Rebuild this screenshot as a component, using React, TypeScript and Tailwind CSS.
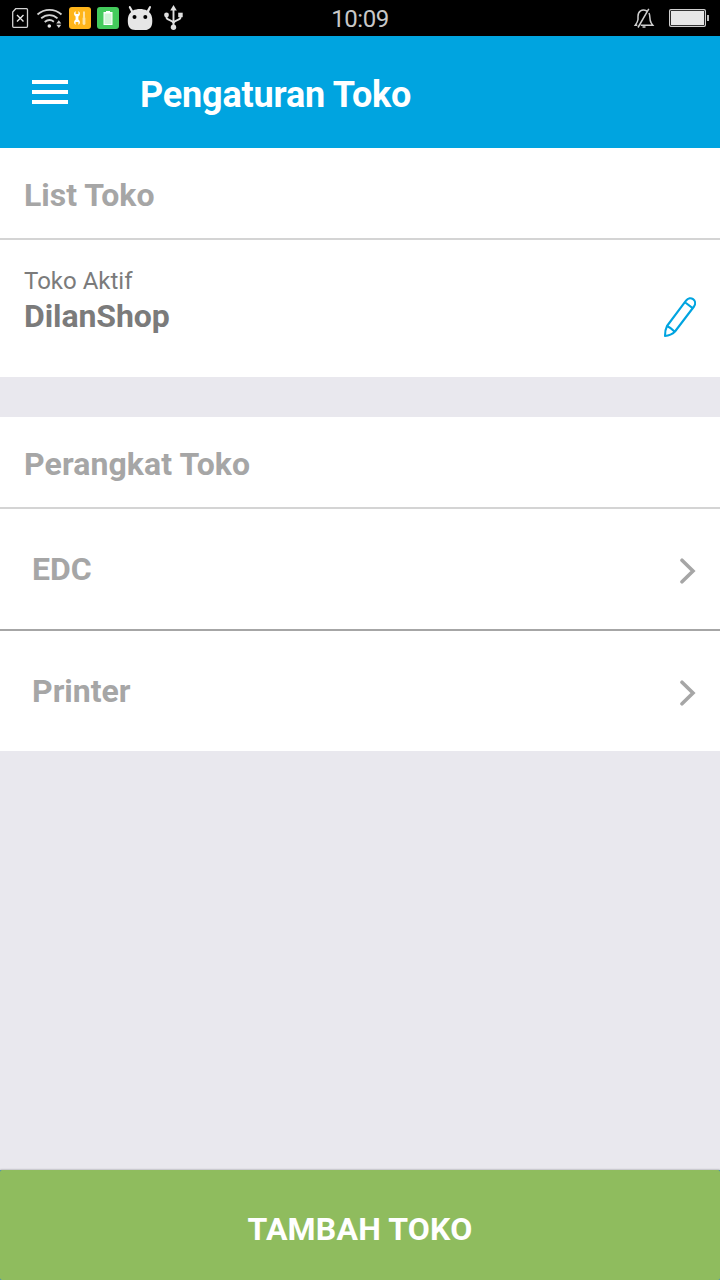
import React from "react";

function StatusBar() {
  return (
    <header className="grid h-9 grid-cols-3 items-center bg-black">
      <svg width="200" height="36" viewBox="0 0 200 36" fill="none">
        <path d="M15.700 8.700H26.500a1 1 0 0 1 1 1v16.600a1 1 0 0 1-1 1h-12.800a1 1 0 0 1-1-1V12Z" stroke="#d2d2d2" strokeWidth="1.300" />
        <path d="m17 15 6.500 6.500M23.500 15 17 21.500" stroke="#e6e6e6" strokeWidth="1.400" />
        <path d="M37.500 14.500c7-6.300 17-6.300 24 0M41.200 18.300c5-4.300 11.500-4.300 16.300 0M44.700 22c3-2.500 6.300-2.500 9.200-.3" stroke="#d2d2d2" strokeWidth="1.800" />
        <circle cx="49.300" cy="26" r="1.800" fill="#e6e6e6" />
        <path d="m58.800 20.200 2.500 3.200h-5Zm0 7.800 2.500-3.200h-5Z" fill="#d2d2d2" />
        <rect x="69" y="7" width="22" height="22" rx="3" fill="#ffb51a" />
        <path d="M75.600 11v3h2.800v-3c2.100 1.500 2.100 4.300 0 5.500v3c2.100 1.200 2.100 4 0 5.500v-3h-2.800v3c-2.100-1.500-2.100-4.300 0-5.500v-3c-2.100-1.200-2.100-4 0-5.500Z" fill="#fff" />
        <path d="M84 11.500v6" stroke="#fff" strokeWidth="1.200" />
        <path d="M84 18.500v5" stroke="#ffe4a3" strokeWidth="2.800" strokeLinecap="round" />
        <rect x="97" y="7" width="22" height="22" rx="3" fill="#44cb5c" />
        <path d="M103.500 12h2.500v-1h4v1h2.500v13h-9Z" fill="#fff" />
        <path d="M104.500 13.500h7v10.500h-7Z" fill="#d0f4d6" />
        <path d="M129.200 6.200c.8-.5 1.300 0 1.700.8l2 3.500c4-2 10-2 14 0l2-3.500c.4-.8 1-1.300 1.700-.8s.4 1.300 0 2L149 12c2.500 2 3.300 5 3.300 9 0 6.500-3 9-7.500 9h-9.500c-5 0-7.500-3-7.500-9 0-4 .8-7 3.300-9l-1.900-3.800c-.4-.7-.6-1.500 0-2Z" fill="#e6e6e6" />
        <circle cx="134.500" cy="17" r="2" fill="#000" />
        <circle cx="145.300" cy="17" r="2" fill="#000" />
        <path d="M173.500 9v17M166.500 16v1.500c0 3 7 2.300 7 6M180.500 16v1.500c0 3-7 2.300-7 6" stroke="#e0e0e0" strokeWidth="1.900" />
        <path d="m173.500 5 3.300 5.500h-6.600Z" fill="#e0e0e0" />
        <circle cx="166.500" cy="15" r="2.400" fill="#e0e0e0" />
        <path d="M178.200 12.700h4.500v4.500h-4.500Z" fill="#e0e0e0" />
        <circle cx="173.500" cy="27.300" r="2.700" fill="#e0e0e0" />
      </svg>
      <time className="pt-px text-center text-[24px] leading-none tracking-[-0.5px] text-[#c8c8c8]">10:09</time>
      <svg className="justify-self-end" width="100" height="36" viewBox="620 0 100 36" fill="none">
        <path d="M638 19.500c-.3 2.500-1.200 3.800-2.700 5.800h2M646.800 11c-5-2.500-8.800.7-8.800 5.200v3.300M649 13c1.500 3 .2 6.500 2 9.500.5.900 1 1.800 1.800 2.800h-12M642.500 27h3M648.800 8.800 638 27.500" stroke="#cfcfcf" strokeWidth="1.500" />
        <rect x="669.600" y="9.600" width="35.800" height="16.800" rx="1.300" stroke="#cfcfcf" strokeWidth="1.200" />
        <path d="M671 11h33v14h-33Z" fill="#e6e6e6" />
        <path d="M707 15h2v6h-2Z" fill="#bdbdbd" />
      </svg>
    </header>
  );
}

function SectionTitle({ children }: { children: React.ReactNode }) {
  return (
    <h2 className="flex h-[92px] items-center border-b-2 border-[#d4d4d4] px-6 pt-1 text-[32px] font-bold text-[#a6a6a6]">
      {children}
    </h2>
  );
}

function DeviceRow({ label }: { label: string }) {
  return (
    <button className="flex h-[120px] w-full items-center justify-between bg-white pr-6 pl-8 text-[32px] font-bold text-[#a6a6a6]">
      <span>{label}</span>
      <svg className="mt-1" width="17" height="26" viewBox="0 0 17 26" fill="none" stroke="#a6a6a6" strokeWidth="3.600">
        <path d="m3 2.200 11 10.800L3 23.800" strokeLinecap="round" />
      </svg>
    </button>
  );
}

export default function App() {
  return (
    <div className="flex h-[1280px] w-[720px] flex-col bg-[#e9e8ee] font-['Roboto',sans-serif]">
      <StatusBar />
      <nav className="flex h-28 items-center bg-[#00a4e0] pl-8 text-white">
        <button className="flex w-9 flex-col gap-1.5" aria-label="Menu">
          <span className="h-1 bg-white" />
          <span className="h-1 bg-white" />
          <span className="h-1 bg-white" />
        </button>
        <h1 className="ml-[72px] pt-1.5 text-[36px] leading-none font-bold tracking-[-0.18px]">Pengaturan Toko</h1>
      </nav>
      <section className="h-[229px] bg-white">
        <SectionTitle>List Toko</SectionTitle>
        <div className="flex justify-between pt-[27px] pr-6 pl-6">
          <div>
            <p className="text-[24px] leading-7 text-[#7b7b7b]">Toko Aktif</p>
            <p className="pt-[2px] text-[32px] leading-[38px] font-bold tracking-[-0.1px] text-[#7b7b7b]">DilanShop</p>
          </div>
          <svg className="mt-[29px]" width="33" height="42" viewBox="663 296 33 42" fill="none" stroke="#00a4e0" strokeWidth="2.100" strokeLinejoin="round">
            <path d="m667 326 19-25.300c4.200-5.700 12-.2 8 5.800l-19 25c-2.500 2.500-6 4.200-10 4.500 0-4 .4-7 2-10ZM667 326c2.500 1 4.500 2.500 7.500 5.500M685.300 302.500l7 5.300" />
          </svg>
        </div>
      </section>
      <section className="mt-10 bg-white">
        <SectionTitle><span className="tracking-[0.1px]">Perangkat Toko</span></SectionTitle>
        <DeviceRow label="EDC" />
        <div className="h-0.5 bg-[#a6a6a6]" />
        <DeviceRow label="Printer" />
      </section>
      <footer className="mt-auto bg-[#3b86d0] shadow-[0_0_2px_#00000066]">
        <button className="h-[110px] w-full rounded-[2px] bg-[#8fbc5e] pt-2 text-[32px] font-bold tracking-[0.2px] text-white">TAMBAH TOKO</button>
      </footer>
    </div>
  );
}
